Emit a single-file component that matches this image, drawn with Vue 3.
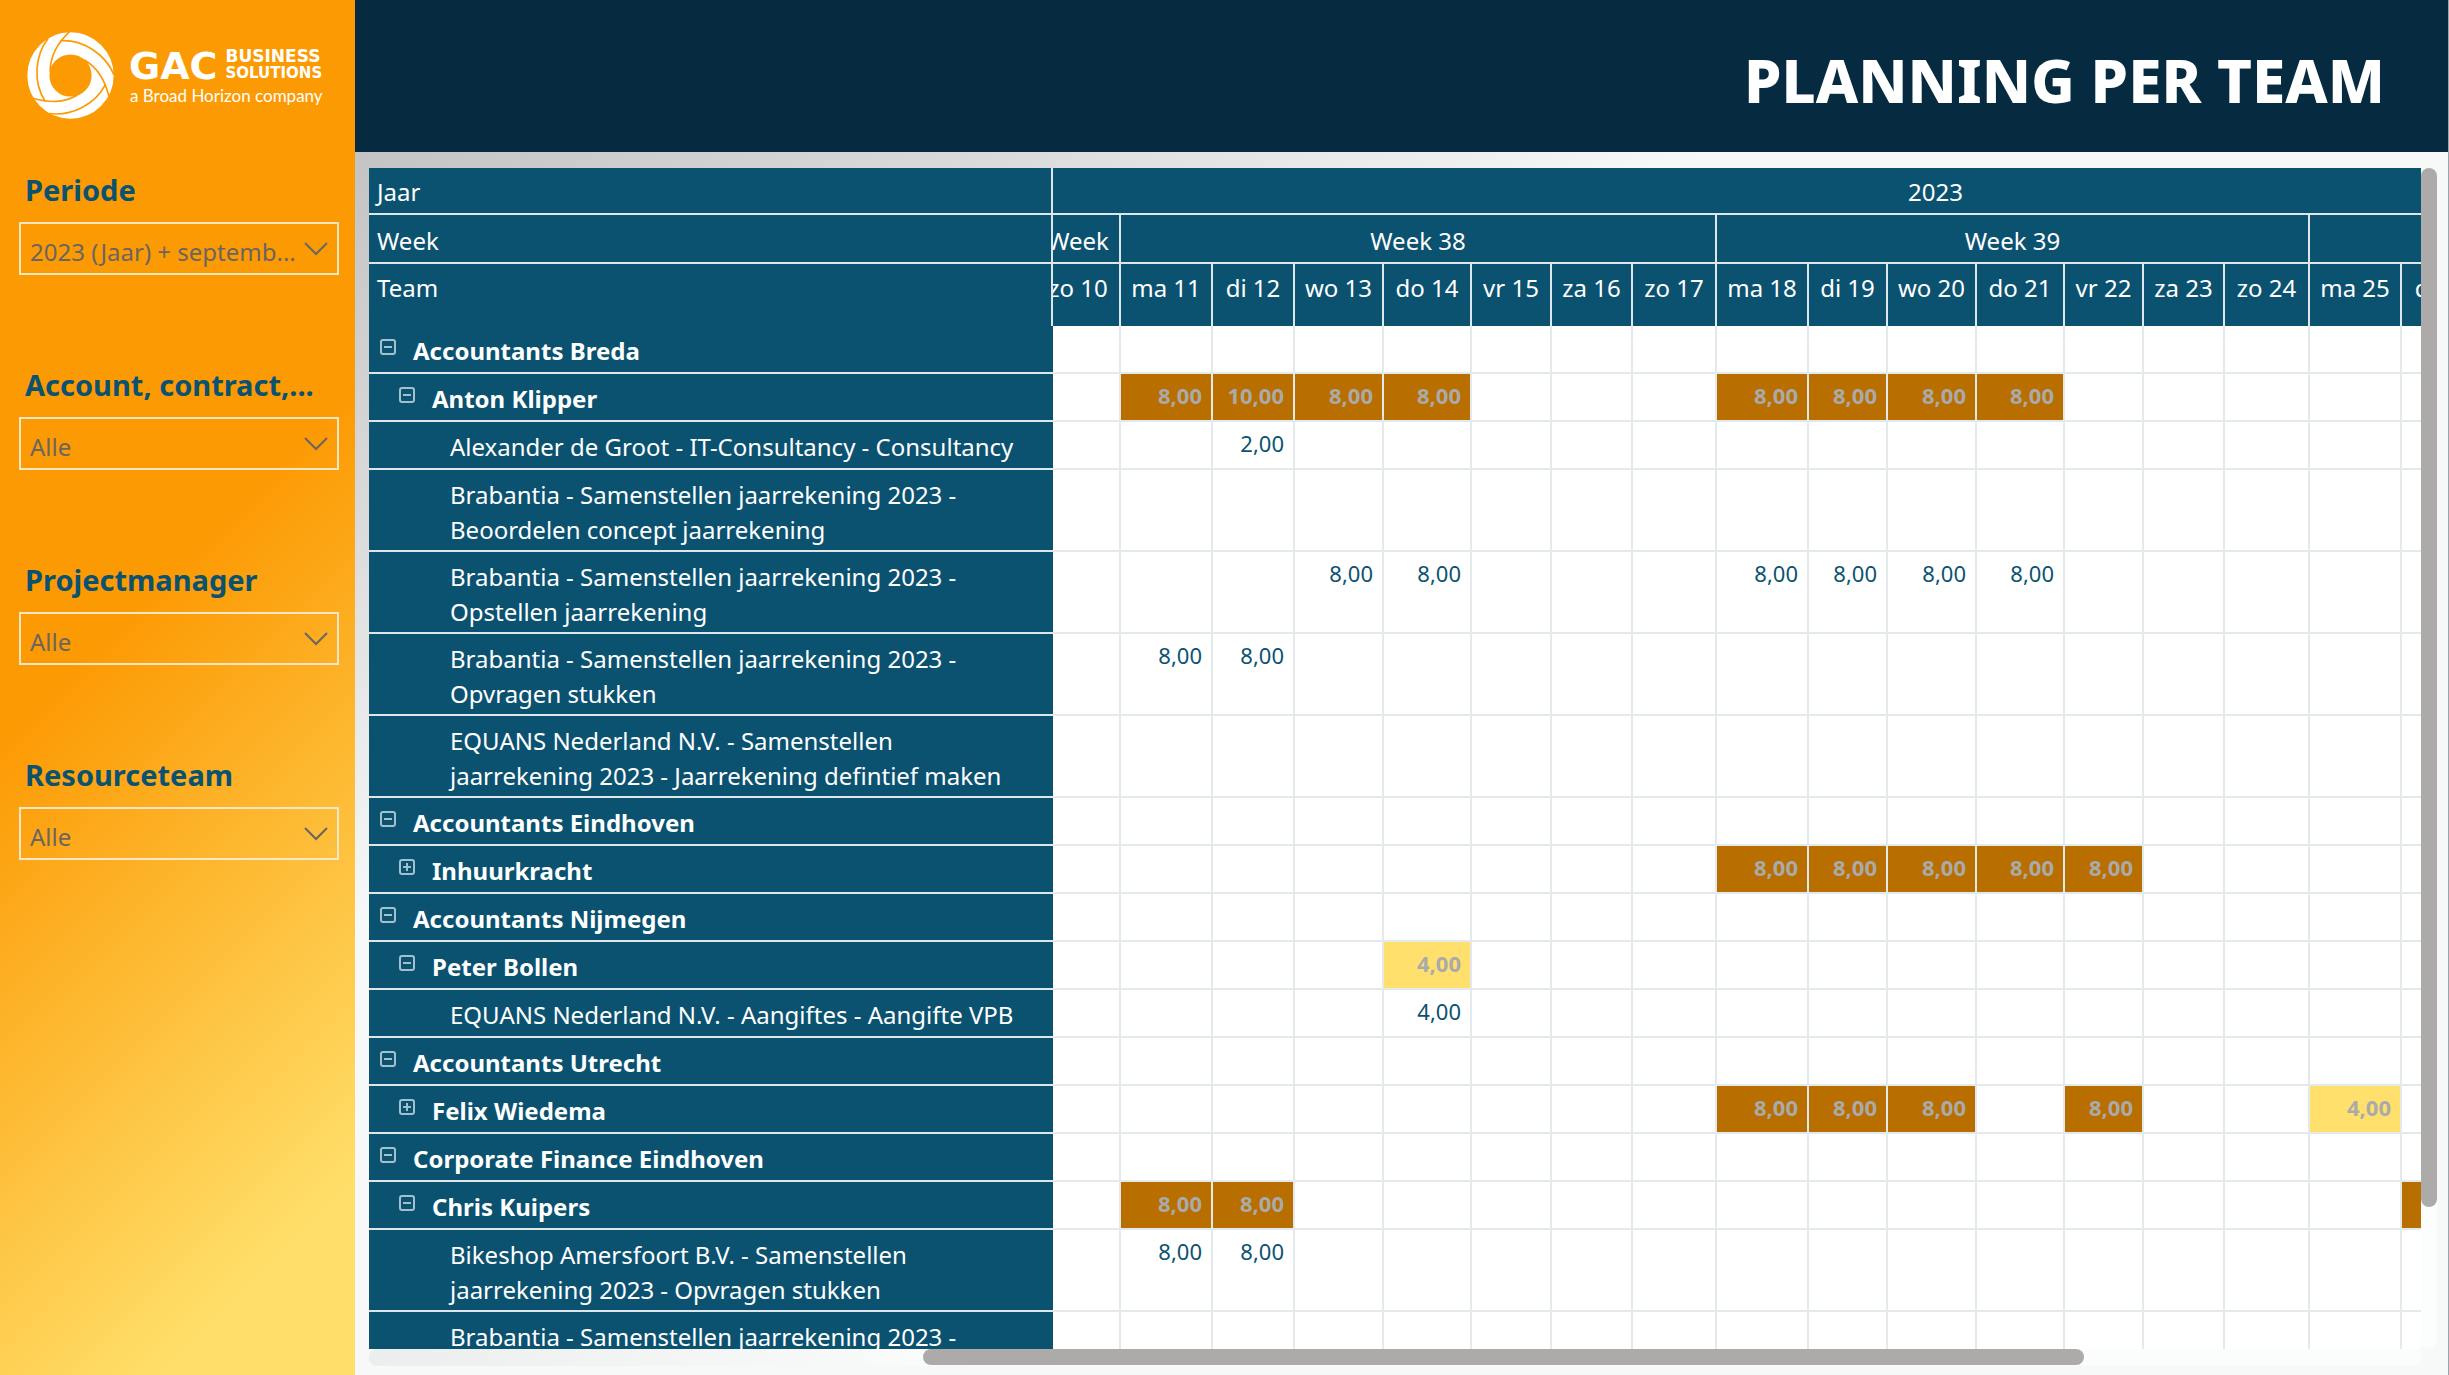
<script setup>
const filters = [
  { id: 'periode', label: 'Periode', value: '2023 (Jaar) + septemb...' },
  { id: 'account', label: 'Account, contract,...', value: 'Alle' },
  { id: 'projectmanager', label: 'Projectmanager', value: 'Alle' },
  { id: 'resourceteam', label: 'Resourceteam', value: 'Alle' },
]

const days = [
  { label: 'zo 10', width: 68 },
  { label: 'ma 11', width: 92 },
  { label: 'di 12', width: 82 },
  { label: 'wo 13', width: 89 },
  { label: 'do 14', width: 88 },
  { label: 'vr 15', width: 80 },
  { label: 'za 16', width: 81 },
  { label: 'zo 17', width: 84 },
  { label: 'ma 18', width: 92 },
  { label: 'di 19', width: 79 },
  { label: 'wo 20', width: 89 },
  { label: 'do 21', width: 88 },
  { label: 'vr 22', width: 79 },
  { label: 'za 23', width: 81 },
  { label: 'zo 24', width: 85 },
  { label: 'ma 25', width: 92 },
  { label: 'di 26', width: 82 },
]
const labelWidth = 684
const tableWidth = days.reduce((sum, d) => sum + d.width, labelWidth)

const rows = [
  { level: 0, open: true, lines: ['Accountants Breda'] },
  { level: 1, open: true, lines: ['Anton Klipper'], hours: { 1: '8,00', 2: '10,00', 3: '8,00', 4: '8,00', 8: '8,00', 9: '8,00', 10: '8,00', 11: '8,00' } },
  { level: 2, lines: ['Alexander de Groot - IT-Consultancy - Consultancy'], hours: { 2: '2,00' } },
  { level: 2, lines: ['Brabantia - Samenstellen jaarrekening 2023 -', 'Beoordelen concept jaarrekening'] },
  { level: 2, lines: ['Brabantia - Samenstellen jaarrekening 2023 -', 'Opstellen jaarrekening'], hours: { 3: '8,00', 4: '8,00', 8: '8,00', 9: '8,00', 10: '8,00', 11: '8,00' } },
  { level: 2, lines: ['Brabantia - Samenstellen jaarrekening 2023 -', 'Opvragen stukken'], hours: { 1: '8,00', 2: '8,00' } },
  { level: 2, lines: ['EQUANS Nederland N.V. - Samenstellen', 'jaarrekening 2023 - Jaarrekening defintief maken'] },
  { level: 0, open: true, lines: ['Accountants Eindhoven'] },
  { level: 1, open: false, lines: ['Inhuurkracht'], hours: { 8: '8,00', 9: '8,00', 10: '8,00', 11: '8,00', 12: '8,00' } },
  { level: 0, open: true, lines: ['Accountants Nijmegen'] },
  { level: 1, open: true, lines: ['Peter Bollen'], hours: { 4: '4,00' } },
  { level: 2, lines: ['EQUANS Nederland N.V. - Aangiftes - Aangifte VPB'], hours: { 4: '4,00' } },
  { level: 0, open: true, lines: ['Accountants Utrecht'] },
  { level: 1, open: false, lines: ['Felix Wiedema'], hours: { 8: '8,00', 9: '8,00', 10: '8,00', 12: '8,00', 15: '4,00' } },
  { level: 0, open: true, lines: ['Corporate Finance Eindhoven'] },
  { level: 1, open: true, lines: ['Chris Kuipers'], hours: { 1: '8,00', 2: '8,00', 16: '8,00' } },
  { level: 2, lines: ['Bikeshop Amersfoort B.V. - Samenstellen', 'jaarrekening 2023 - Opvragen stukken'], hours: { 1: '8,00', 2: '8,00' } },
  { level: 2, lines: ['Brabantia - Samenstellen jaarrekening 2023 -', 'Opvragen stukken'] },
]

function cellClass(row, i) {
  const value = row.hours?.[i]
  if (row.level !== 1 || !value) return ''
  return value === '4,00' ? 'half' : 'full'
}
</script>

<template>
  <div class="page">
    <aside class="sidebar">
      <div class="logo">
        <svg class="mark" viewBox="-130 -130 260 260" aria-hidden="true">
          <circle r="96" fill="none" stroke="#fff" stroke-width="66" />
          <g fill="none" stroke="#fc9a04" stroke-width="5">
            <g v-for="angle in [0, 120, 240]" :key="angle" :transform="`rotate(${angle})`">
              <path d="M-3-131C-40-95-60-60-61-12" />
              <path d="M-30-104C40-108 105-62 130-2" />
            </g>
          </g>
        </svg>
        <div class="brand">
          <div class="brand-top">
            <span class="gac">GAC</span>
            <span class="brand-side">
              <span class="business">BUSINESS</span>
              <span class="solutions">SOLUTIONS</span>
            </span>
          </div>
          <span class="tagline">a Broad Horizon company</span>
        </div>
      </div>

      <div v-for="f in filters" :key="f.id" class="filter">
        <label :for="f.id">{{ f.label }}</label>
        <div class="select-box">
          <select :id="f.id">
            <option>{{ f.value }}</option>
          </select>
          <svg viewBox="0 0 24 14" aria-hidden="true"><path d="M1 1l11 11L23 1" /></svg>
        </div>
      </div>
    </aside>

    <main class="main">
      <header class="title-bar"><h1>PLANNING PER TEAM</h1></header>
      <section class="report">
        <div class="viewport">
          <table :style="{ width: tableWidth + 'px' }">
            <colgroup>
              <col :style="{ width: labelWidth + 'px' }" />
              <col v-for="d in days" :key="d.label" :style="{ width: d.width + 'px' }" />
            </colgroup>
            <thead>
              <tr class="year-row">
                <th scope="row">Jaar</th>
                <th colspan="17" class="year">2023</th>
              </tr>
              <tr class="week-row">
                <th scope="row">Week</th>
                <th class="cut"><span>Week</span></th>
                <th colspan="7">Week 38</th>
                <th colspan="7">Week 39</th>
                <th colspan="2"></th>
              </tr>
              <tr class="day-row">
                <th scope="row">Team</th>
                <th v-for="(d, i) in days" :key="d.label" scope="col" :class="{ cut: i === 0 }">
                  <span>{{ d.label }}</span>
                </th>
              </tr>
            </thead>
            <tbody>
              <tr v-for="(row, r) in rows" :key="r" :class="['level-' + row.level, { tall: row.lines.length > 1 }]">
                <th scope="row">
                  <div class="row-label">
                    <button v-if="row.level < 2" type="button" :aria-expanded="row.open" :aria-label="row.lines[0]">
                      <svg viewBox="0 0 16 16" aria-hidden="true">
                        <rect x="1" y="1" width="14" height="14" rx="2" />
                        <path d="M4 8h8" />
                        <path v-if="!row.open" d="M8 4v8" />
                      </svg>
                    </button>
                    <span class="name"><span v-for="line in row.lines" :key="line">{{ line }}</span></span>
                  </div>
                </th>
                <td v-for="(d, i) in days" :key="d.label" :class="cellClass(row, i)">{{ row.hours?.[i] }}</td>
              </tr>
            </tbody>
          </table>
        </div>
        <div class="track vertical"><div class="thumb"></div></div>
        <div class="track horizontal"><div class="thumb"></div></div>
      </section>
    </main>
  </div>
</template>

<style>
body {
  margin: 0;
}
</style>

<style scoped>
.page {
  display: flex;
  height: 100vh;
  overflow: hidden;
  box-sizing: border-box;
  font-family: "Noto Sans", "Open Sans", sans-serif;
  color: #0b5271;
}

.sidebar {
  flex: 0 0 355px;
  box-sizing: border-box;
  padding: 32px 16px 0 19px;
  background: linear-gradient(135deg, #fc9a04 43%, #ffdf6a 89%);
}

.logo {
  display: flex;
  align-items: flex-start;
  gap: 15px;
  height: 134px;
  padding-left: 8px;
  color: #fff;
}
.mark {
  width: 87px;
  height: 87px;
  flex: none;
}
.brand {
  display: flex;
  flex-direction: column;
  padding-top: 16px;
  white-space: nowrap;
}
.brand-top {
  display: flex;
  gap: 8px;
  font-family: "DejaVu Sans", sans-serif;
  font-weight: 700;
}
.gac {
  font-size: 38px;
  line-height: 36px;
}
.brand-side {
  display: flex;
  flex-direction: column;
  line-height: 17px;
}
.business {
  font-size: 17px;
}
.solutions {
  font-size: 15px;
}
.tagline {
  margin-left: 1px;
  font-family: Lato, sans-serif;
  font-size: 17px;
  line-height: 24px;
}

.filter {
  height: 195px;
}
.filter label {
  display: block;
  height: 56px;
  padding-left: 6px;
  font-size: 29px;
  line-height: 48px;
  font-weight: 700;
  white-space: nowrap;
}
.select-box {
  position: relative;
  height: 53px;
}
.select-box select {
  appearance: none;
  width: 100%;
  height: 53px;
  padding: 5px 30px 0 9px;
  border: 2px solid #f6e6c8;
  border-radius: 0;
  background: transparent;
  color: #6b6560;
  font-family: inherit;
  font-size: 24px;
}
.select-box svg {
  position: absolute;
  right: 11px;
  top: 20px;
  width: 24px;
  height: 14px;
  fill: none;
  stroke: #6b6560;
  stroke-width: 2;
  pointer-events: none;
}

.main {
  flex: 1;
  min-width: 0;
  display: flex;
  flex-direction: column;
  border-right: 1px solid #9aa5aa;
  background: linear-gradient(150deg, #bdbdbd 2%, #dadada 20%, #f7f9f8 36%);
}
.title-bar {
  flex: 0 0 152px;
  display: flex;
  align-items: center;
  justify-content: flex-end;
  padding-right: 63px;
  background: #062b40;
}
h1 {
  margin: 0;
  padding-top: 8px;
  color: #fff;
  font-size: 60px;
  line-height: 80px;
  font-weight: 800;
  white-space: nowrap;
}
.report {
  flex: 1;
  min-height: 0;
  display: grid;
  grid-template-columns: minmax(0, 1fr) 16px;
  grid-template-rows: minmax(0, 1fr) 17px;
  padding: 16px 11px 9px 14px;
}
.viewport {
  overflow: hidden;
  background: #fff;
}

table {
  table-layout: fixed;
  border-collapse: separate;
  border-spacing: 0;
}
th,
td {
  box-sizing: border-box;
  padding: 0;
  vertical-align: top;
  overflow: hidden;
  white-space: nowrap;
}
th {
  background: #0b5271;
  color: #fff;
  font-size: 24px;
  line-height: 35px;
  font-weight: 400;
}
thead th {
  border-right: 2px solid #dde6ea;
  border-bottom: 2px solid #dde6ea;
  text-align: center;
}
thead th[scope='row'] {
  padding-left: 8px;
  text-align: left;
}
.year-row th {
  height: 47px;
  padding-top: 6px;
}
.year-row .year {
  padding-left: 336px;
}
.week-row th {
  height: 49px;
  padding-top: 8px;
}
.day-row th {
  height: 62px;
  padding-top: 6px;
  border-bottom: 0;
}
.cut span {
  display: flex;
  justify-content: center;
  margin-left: -16px;
}

tbody th {
  border-bottom: 2px solid #dde6ea;
  text-align: left;
}
tbody tr {
  height: 48px;
}
tbody .tall {
  height: 82px;
}
.row-label {
  display: flex;
  align-items: flex-start;
  padding-top: 7px;
}
.level-0 .row-label {
  padding-left: 11px;
}
.level-1 .row-label {
  padding-left: 30px;
}
.level-2 .row-label {
  padding-left: 81px;
}
.level-0 .name,
.level-1 .name {
  font-weight: 700;
}
.name {
  display: flex;
  flex-direction: column;
}
button {
  width: 16px;
  height: 16px;
  margin: 6px 17px 0 0;
  padding: 0;
  border: 0;
  background: none;
}
button svg {
  display: block;
  width: 16px;
  height: 16px;
  fill: none;
  stroke: #a3c0cd;
  stroke-width: 2;
}

td {
  padding: 5px 9px 0 0;
  border-right: 2px solid #e4eaec;
  border-bottom: 2px solid #e4eaec;
  background: #fff;
  font-size: 22px;
  line-height: 32px;
  text-align: right;
}
.level-1 td {
  color: #aaa;
  font-weight: 700;
}
td.full {
  background: #b86f00;
}
td.half {
  background: #ffe06c;
}

.track {
  border-radius: 8px;
  background: #fcfdfd;
}
.track.horizontal {
  background: linear-gradient(90deg, #eceeee, #fbfcfc 30%);
}
.thumb {
  border-radius: 8px;
  background: #acaba9;
}
.vertical .thumb {
  height: 88%;
}
.horizontal .thumb {
  height: 16px;
  width: 56.6%;
  margin-left: 27%;
}
</style>
